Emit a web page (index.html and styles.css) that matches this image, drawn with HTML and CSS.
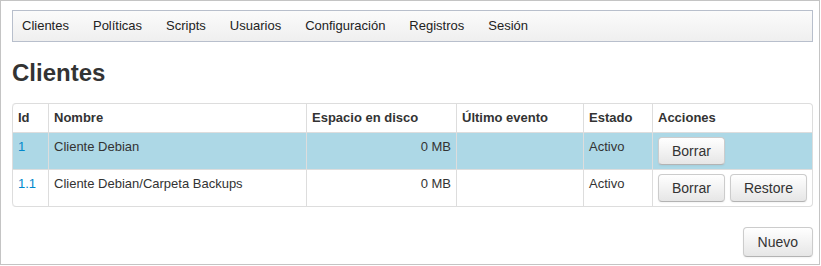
FILE: index.html
```html
<!DOCTYPE html>
<html>
<head>
<title>Clientes</title>
<link rel="stylesheet" href="styles.css">
</head>
<body>
  <div class="frame">
    <div class="navbar">
      <a href="#">Clientes</a>
      <a href="#">Políticas</a>
      <a href="#">Scripts</a>
      <a href="#">Usuarios</a>
      <a href="#">Configuración</a>
      <a href="#">Registros</a>
      <a href="#">Sesión</a>
    </div>

    <h1>Clientes</h1>

    <table class="clients">
      <colgroup>
        <col class="col-id">
        <col class="col-name">
        <col class="col-disk">
        <col class="col-event">
        <col class="col-state">
        <col class="col-actions">
      </colgroup>
      <thead>
        <tr>
          <th>Id</th>
          <th>Nombre</th>
          <th>Espacio en disco</th>
          <th>Último evento</th>
          <th>Estado</th>
          <th>Acciones</th>
        </tr>
      </thead>
      <tbody>
        <tr class="selected">
          <td><a href="#">1</a></td>
          <td>Cliente Debian</td>
          <td class="num">0 MB</td>
          <td></td>
          <td>Activo</td>
          <td><div class="actions"><button class="btn">Borrar</button></div></td>
        </tr>
        <tr>
          <td><a href="#">1.1</a></td>
          <td>Cliente Debian/Carpeta Backups</td>
          <td class="num">0 MB</td>
          <td></td>
          <td>Activo</td>
          <td><div class="actions"><button class="btn">Borrar</button><button class="btn">Restore</button></div></td>
        </tr>
      </tbody>
    </table>

    <div class="footer">
      <button class="btn btn-new">Nuevo</button>
    </div>
  </div>
</body>
</html>
```

FILE: styles.css
```css
body {
  margin: 0;
  font-family: "Liberation Sans", Arial, sans-serif;
  font-size: 13px;
  color: #333;
  background: #fff;
}

.frame {
  width: 820px;
  height: 265px;
  box-sizing: border-box;
  border: 1px solid #c4c4c4;
  padding: 9px 6px 0 11px;
}

.navbar {
  height: 32px;
  box-sizing: border-box;
  border: 1px solid #b8bfcc;
  background: linear-gradient(#fbfbfb, #efefef);
  display: flex;
  align-items: center;
  gap: 24px;
  padding-left: 9px;
}

.navbar a {
  color: #222;
  text-decoration: none;
  line-height: 30px;
}

h1 {
  margin: 17px 0 16px;
  font-size: 24px;
  line-height: 28px;
  font-weight: bold;
  color: #333;
}

.clients {
  width: 100%;
  table-layout: fixed;
  border-collapse: separate;
  border-spacing: 0;
  border: 1px solid #ddd;
  border-left: 0;
  border-radius: 4px;
}

.col-id { width: 36px; }
.col-name { width: 258px; }
.col-disk { width: 150px; }
.col-event { width: 127px; }
.col-state { width: 69px; }

.clients th,
.clients td {
  border-left: 1px solid #ddd;
  border-top: 1px solid #ddd;
  padding: 4px 5px;
  line-height: 19px;
  text-align: left;
  vertical-align: top;
}

.clients th {
  font-weight: bold;
  padding-bottom: 5px;
  border-top: 0;
}

.clients thead th:first-child {
  border-top-left-radius: 4px;
}

.clients tbody tr:last-child td:first-child {
  border-bottom-left-radius: 4px;
}

.clients .num {
  text-align: right;
}

.clients a {
  color: #0088cc;
  text-decoration: none;
}

.clients tr.selected td {
  background: #add8e6;
}

.actions {
  display: flex;
  gap: 5px;
}

.btn {
  font-family: "Liberation Sans", Arial, sans-serif;
  font-size: 14px;
  line-height: 20px;
  padding: 3px 13px;
  color: #333;
  border: 1px solid #ccc;
  border-bottom-color: #b3b3b3;
  border-radius: 4px;
  background: linear-gradient(#ffffff, #e6e6e6);
  box-shadow: inset 0 1px 0 rgba(255, 255, 255, 0.2), 0 1px 2px rgba(0, 0, 0, 0.05);
  cursor: pointer;
}

.footer {
  display: flex;
  justify-content: flex-end;
  margin-top: 20px;
}

.btn-new {
  padding: 4px 14px;
}
```
